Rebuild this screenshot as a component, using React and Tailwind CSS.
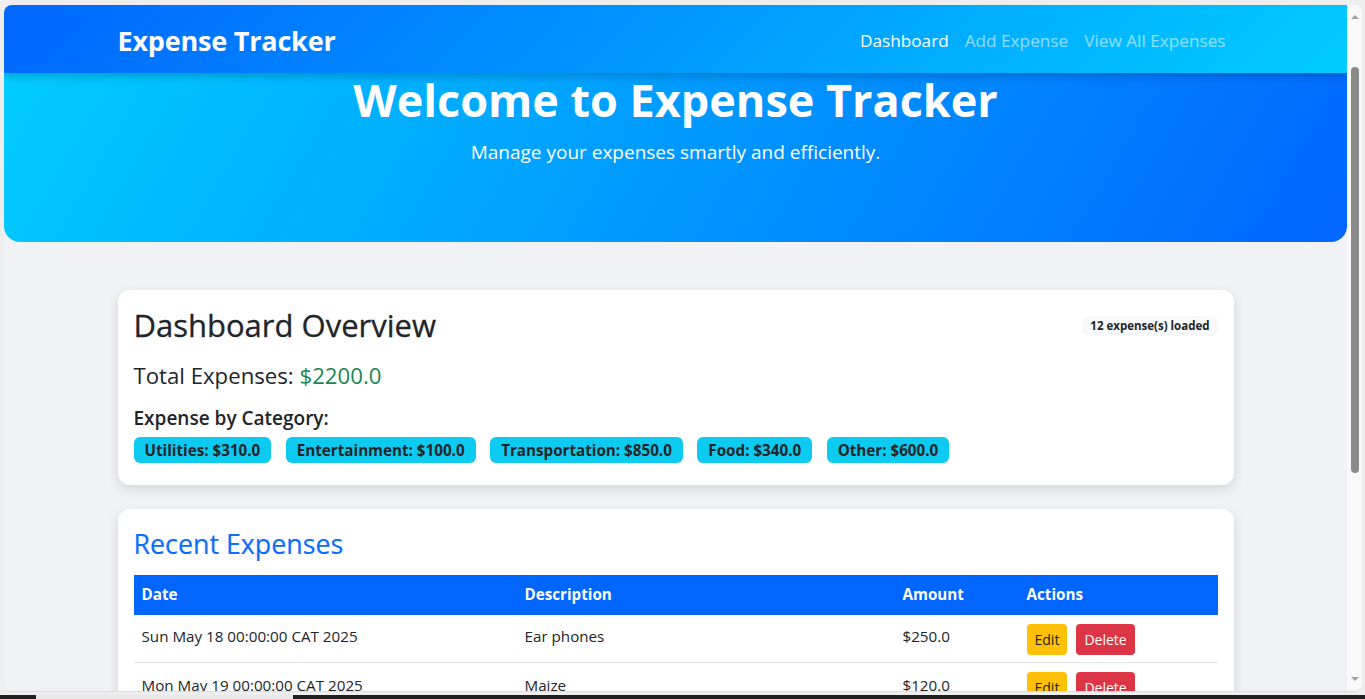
import { useState } from "react"

const categories = [
  { name: "Utilities", amount: "310.0" },
  { name: "Entertainment", amount: "100.0" },
  { name: "Transportation", amount: "850.0" },
  { name: "Food", amount: "340.0" },
  { name: "Other", amount: "600.0" },
]

const expenses = [
  { date: "Sun May 18 00:00:00 CAT 2025", description: "Ear phones", amount: "250.0" },
  { date: "Mon May 19 00:00:00 CAT 2025", description: "Maize", amount: "120.0" },
  { date: "Tue May 20 00:00:00 CAT 2025", description: "Bus fare", amount: "80.0" },
]

const Navbar = () => (
  <nav className="h-[68px] shrink-0 bg-[linear-gradient(135deg,#0066ff,#00ccff)] shadow-[0_4px_8px_rgba(0,0,0,0.18)] relative z-10">
    <div className="w-[1140px] mx-auto px-3 pt-1 h-full flex items-center justify-between">
      <span className="text-white font-bold text-[27px] tracking-[-0.2px]">Expense Tracker</span>
      <div className="flex items-center text-[17.2px]">
        <a className="px-2 text-white">Dashboard</a>
        <a className="px-2 text-white/55">Add Expense</a>
        <a className="px-2 text-white/55">View All Expenses</a>
      </div>
    </div>
  </nav>
)

const Hero = () => (
  <header className="h-[169px] shrink-0 bg-[linear-gradient(120deg,#00ccff,#0066ff)] rounded-b-2xl text-white text-center">
    <h1 className="pt-[4px] text-[45px] font-bold leading-none">Welcome to Expense Tracker</h1>
    <p className="mt-[21px] text-[19px] leading-none">Manage your expenses smartly and efficiently.</p>
  </header>
)

const Overview = () => (
  <section className="bg-white rounded-xl shadow-[0_4px_12px_rgba(0,0,0,0.12)] px-4 pt-4 pb-[22px]">
    <div className="h-[38px] flex items-center justify-between">
      <h2 className="text-[31px] font-medium text-[#212529] [-webkit-text-stroke:0.3px_#212529]">Dashboard Overview</h2>
      <span className="mt-[2px] bg-[#f8f9fa] text-[#212529] text-[11.5px] font-bold rounded-md px-2 h-5 flex items-center">
        12 expense(s) loaded
      </span>
    </div>
    <p className="mt-[19px] text-[22.2px] leading-[1.2] text-[#212529]">
      Total Expenses: <span className="text-[#198754]">$2200.0</span>
    </p>
    <h5 className="mt-[17px] text-[19px] leading-[1.2] font-semibold text-[#212529]">Expense by Category:</h5>
    <div className="mt-2 flex gap-[14.5px]">
      {categories.map((c) => (
        <span key={c.name} className="h-[26px] px-[11px] flex items-center rounded-md bg-[#0dcaf0] text-[#212529] text-[15.2px] font-bold">
          {c.name}: ${c.amount}
        </span>
      ))}
    </div>
  </section>
)

const RecentExpenses = () => (
  <section className="mt-6 bg-white rounded-xl shadow-[0_4px_12px_rgba(0,0,0,0.12)] px-4 pt-4 pb-4">
    <h3 className="mt-[3px] text-[26.8px] leading-[1.2] font-medium text-[#0d6efd] [-webkit-text-stroke:0.2px_#0d6efd]">Recent Expenses</h3>
    <table className="mt-[14px] w-full text-[15.2px] text-[#212529] border-collapse">
      <thead>
        <tr className="bg-[#0066ff] text-white h-10 text-left">
          <th className="w-[383px] px-2 font-bold">Date</th>
          <th className="w-[378px] px-2 font-bold">Description</th>
          <th className="w-[124px] px-2 font-bold">Amount</th>
          <th className="px-2 font-bold">Actions</th>
        </tr>
      </thead>
      <tbody>
        {expenses.map((e) => (
          <tr key={e.date} className="h-[48px] border-b border-[#dee2e6]">
            <td className="px-2 pb-[3px]">{e.date}</td>
            <td className="px-2 pb-[3px]">{e.description}</td>
            <td className="px-2 pb-[3px]">${e.amount}</td>
            <td className="px-2">
              <div className="flex gap-[9px] pt-[2px]">
                <button className="h-[31px] px-2 rounded bg-[#ffc107] text-[#212529] text-[14px]">Edit</button>
                <button className="h-[31px] px-2 rounded bg-[#dc3545] text-white text-[14px]">Delete</button>
              </div>
            </td>
          </tr>
        ))}
      </tbody>
    </table>
  </section>
)

const Scrollbar = () => (
  <div className="w-[15px] shrink-0 bg-[#f9f9f9] flex flex-col items-center">
    <div className="mt-[10px] w-0 h-0 border-l-[4px] border-r-[4px] border-b-[4px] border-l-transparent border-r-transparent border-b-[#a3a3a3]" />
    <div className="mt-[48px] w-[8px] h-[406px] rounded-full bg-[#8a8a8a]" />
    <div className="mt-auto mb-[10px] w-0 h-0 border-l-[4px] border-r-[4px] border-t-[4px] border-l-transparent border-r-transparent border-t-[#a3a3a3]" />
  </div>
)

export default function App() {
  const [page] = useState("dashboard")
  return (
    <div className="w-[1365px] h-[699px] bg-[#eeeeee] flex flex-col overflow-hidden font-['Open_Sans',sans-serif]">
      <div className="h-[692px] pt-[5px] pl-[4px] pr-[3px] flex">
        <div className="flex-1 flex rounded-lg overflow-hidden border-b border-[#dcdcdc]">
          <main className="flex-1 bg-[#f0f2f5] flex flex-col overflow-hidden" data-page={page}>
            <Navbar />
            <Hero />
            <div className="w-[1140px] mx-auto px-3 mt-12">
              <Overview />
              <RecentExpenses />
            </div>
          </main>
          <Scrollbar />
        </div>
      </div>
      <div className="h-[3px] bg-[#eeeeee]" />
      <div className="h-[4px] flex bg-[#1f1f1f]">
        <div className="ml-[36px] w-[257px] bg-[#e8e8e8]" />
      </div>
    </div>
  )
}
